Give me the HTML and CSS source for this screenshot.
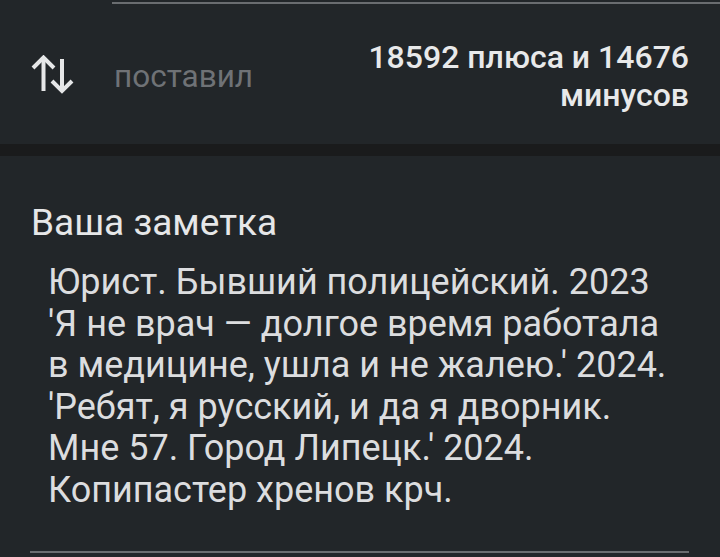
FILE: index.html
```html
<!DOCTYPE html>
<html lang="ru">
<head>
<meta charset="utf-8">
<link rel="stylesheet" href="styles.css">
</head>
<body>
<div class="top-rule"></div>
<section class="vote-row">
  <div class="vote-left">
    <svg class="vote-icon" width="48" height="40" viewBox="0 0 48 40" aria-hidden="true">
      <g fill="none" stroke="#e6e7e8" stroke-width="4" stroke-linecap="butt" stroke-linejoin="miter">
        <path d="M13.5 36V4"/>
        <path d="M3 13L13.5 2.5L24 13"/>
        <path d="M32 4V36"/>
        <path d="M22 26L32 36L42 26"/>
      </g>
    </svg>
    <span class="vote-label">поставил</span>
  </div>
  <div class="vote-count">18592 плюса и 14676<br>минусов</div>
</section>
<div class="band"></div>
<section class="note">
  <h2 class="note-title">Ваша заметка</h2>
  <p class="note-text">Юрист. Бывший полицейский. 2023<br>'Я не врач — долгое время работала<br>в медицине, ушла и не жалею.' 2024.<br>'Ребят, я русский, и да я дворник.<br>Мне 57. Город Липецк.' 2024.<br>Копипастер хренов крч.</p>
  <div class="note-rule"></div>
</section>
</body>
</html>
```

FILE: styles.css
```css
html, body {
  margin: 0;
  padding: 0;
  background: #222629;
  font-family: Roboto, "Noto Sans", sans-serif;
  color: #e6e7e8;
  height: 557px;
  overflow: hidden;
}
.top-rule {
  margin-left: 112px;
  margin-top: 2px;
  height: 2px;
  background: #6a6d70;
}
.vote-row {
  display: flex;
  justify-content: space-between;
  align-items: flex-start;
  height: 140px;
  padding: 0 31px 0 30px;
}
.vote-left {
  display: flex;
  align-items: center;
  margin-top: 51px;
}
.vote-icon {
  display: block;
}
.vote-label {
  margin-left: 36px;
  margin-top: 3px;
  font-size: 31.5px;
  color: #6f7276;
  line-height: 1;
}
.vote-count {
  margin-top: 34px;
  text-align: right;
  font-size: 32px;
  font-weight: 500;
  line-height: 38px;
  color: #e8e9ea;
}
.band {
  height: 12px;
  background: #1a1b1c;
}
.note {
  padding: 46px 30px 0 31px;
}
.note-title {
  margin: 0;
  font-size: 37px;
  font-weight: 400;
  line-height: 42px;
  color: #e6e7e8;
}
.note-text {
  margin: 18px 0 0 17px;
  font-size: 36px;
  line-height: 41.6px;
  color: #dcdddf;
  white-space: nowrap;
}
.note-rule {
  margin-top: 39px;
  margin-left: -1px;
  width: 659px;
  height: 2px;
  background: #6a6d70;
}
```
